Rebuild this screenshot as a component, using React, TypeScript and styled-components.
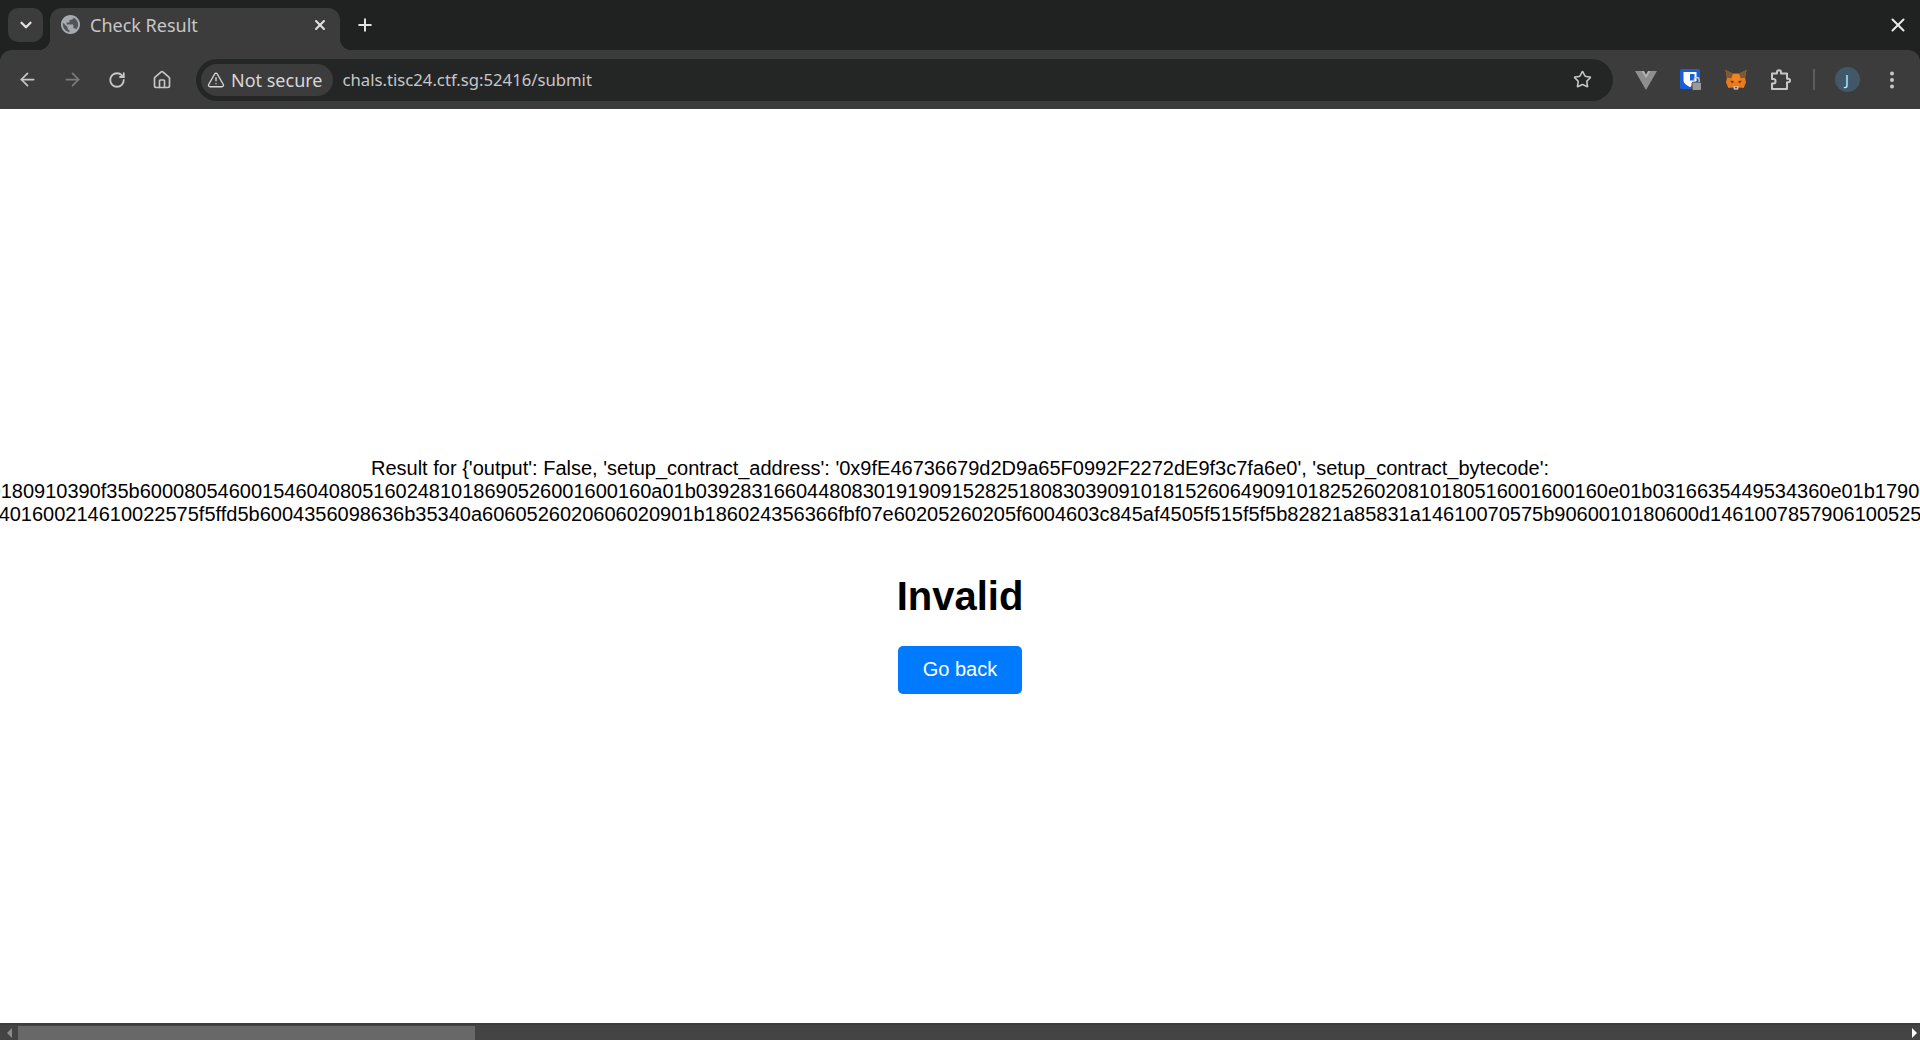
import React from "react";
import styled, { createGlobalStyle } from "styled-components";
import { ArrowLeft, ArrowRight, RotateCw, Home, Star, TriangleAlert, X, Plus, ChevronDown, EllipsisVertical } from "lucide-react";

const Global = createGlobalStyle`
  html, body { margin: 0; padding: 0; height: 1040px; overflow: hidden; background: #fff; }
  #root { height: 1040px; }
  * { box-sizing: border-box; }
`;

const Page = styled.div`
  height: 1040px;
  width: 1920px;
  display: flex;
  flex-direction: column;
  background: #fff;
  font-family: "Liberation Sans", Arial, sans-serif;
`;

const TabStrip = styled.div`
  height: 50px;
  flex: none;
  background: #202222;
  display: flex;
  align-items: flex-end;
  padding-left: 8px;
  padding-right: 4px;
  color: #e3e3e3;
`;

const TabSearch = styled.div`
  width: 35px;
  height: 34px;
  margin-bottom: 8px;
  border-radius: 10px;
  background: #3c3c3c;
  display: flex;
  align-items: center;
  justify-content: center;
  color: #e3e3e3;
`;

const Tab = styled.div`
  position: relative;
  width: 290px;
  height: 42px;
  margin-left: 7px;
  background: #3c3c3c;
  border-radius: 12px 12px 0 0;
  display: flex;
  align-items: center;
  padding: 0 12px 9px 11px;
  &::before, &::after {
    content: "";
    position: absolute;
    bottom: 0;
    width: 12px;
    height: 12px;
  }
  &::before { left: -12px; background: radial-gradient(circle at 0 0, transparent 12px, #3c3c3c 12.5px); }
  &::after { right: -12px; background: radial-gradient(circle at 100% 0, transparent 12px, #3c3c3c 12.5px); }
`;

const TabTitle = styled.span`
  flex: 1;
  margin-left: 10px;
  font: 400 18px/22px "Noto Sans", sans-serif;
  color: #c7c7c7;
`;

const NewTab = styled.div`
  width: 36px;
  height: 36px;
  margin: 0 0 7px 7px;
  display: flex;
  align-items: center;
  justify-content: center;
  color: #e3e3e3;
`;

const StripSpacer = styled.div`
  flex: 1;
`;

const WindowClose = styled.div`
  width: 36px;
  height: 36px;
  margin-bottom: 7px;
  display: flex;
  align-items: center;
  justify-content: center;
  color: #e8e8e8;
`;

const ToolbarBack = styled.div`
  flex: none;
  height: 59px;
  background: #202222;
`;

const Toolbar = styled.div`
  height: 59px;
  background: #3c3c3c;
  border-radius: 12px 12px 0 0;
  display: flex;
  align-items: center;
  padding: 0 10px 0 9px;
  gap: 9px;
`;

const IconButton = styled.div<{ $dim?: boolean }>`
  width: 36px;
  height: 36px;
  flex: none;
  display: flex;
  align-items: center;
  justify-content: center;
  color: ${(p) => (p.$dim ? "#7b7b7b" : "#c7c7c7")};
`;

const Omnibox = styled.div`
  flex: 1;
  height: 42px;
  margin: 0 6px 0 7px;
  border-radius: 21px;
  background: #242626;
  display: flex;
  align-items: center;
  padding: 0 21px 0 5px;
`;

const SecurityChip = styled.div`
  height: 32px;
  padding: 0 10px 0 6px;
  border-radius: 16px;
  background: #3c3c3c;
  display: flex;
  align-items: center;
  gap: 6px;
  color: #d7d7d7;
  font: 400 18px/22px "Noto Sans", sans-serif;
`;

const Url = styled.span`
  flex: 1;
  margin-left: 10px;
  font: 400 16.7px/22px "Noto Sans", sans-serif;
  color: #c7c7c7;
`;

const Divider = styled.div`
  width: 2px;
  height: 21px;
  flex: none;
  background: #5c5c5c;
  margin: 0 5px;
`;

const Avatar = styled.div`
  width: 25px;
  height: 25px;
  border-radius: 50%;
  background: #40586a;
  color: #dfe5ea;
  display: flex;
  align-items: center;
  justify-content: center;
  font: 400 14px "Noto Sans", sans-serif;
`;

const Main = styled.main`
  flex: 1;
  min-height: 0;
  display: flex;
  flex-direction: column;
  align-items: center;
  padding-top: 348px;
  overflow: hidden;
`;

const Line = styled.div`
  width: 100%;
  height: 23px;
  display: flex;
  justify-content: center;
  overflow: hidden;
  font-size: 20px;
  line-height: 23px;
  color: #000;
`;

const LineText = styled.span`
  flex: none;
  white-space: nowrap;
`;

const Title = styled.h1`
  margin: 47px 0 27px;
  font-size: 40px;
  line-height: 46px;
  font-weight: 700;
  color: #000;
`;

const BackButton = styled.a`
  display: block;
  height: 48px;
  padding: 12px 25px;
  border-radius: 5px;
  background: #007bff;
  color: #fff;
  font-size: 20px;
  line-height: 23px;
`;

const ScrollBar = styled.div`
  flex: none;
  height: 17px;
  background: #444;
  border-top: 2px solid #3c3c3c;
  display: flex;
  align-items: center;
  padding-right: 3px;
`;

const ScrollArrow = styled.div<{ $right?: boolean }>`
  width: 0;
  height: 0;
  border-top: 5px solid transparent;
  border-bottom: 5px solid transparent;
  ${(p) => (p.$right ? "border-left: 5px solid #fff; margin-left: 7px;" : "border-right: 5px solid #8c8c8c; margin: 0 6px 0 7px;")}
`;

const ScrollThumb = styled.div`
  width: 457px;
  height: 14px;
  background: #686868;
`;

const ScrollFill = styled.div`
  flex: 1;
`;

const GlobeIcon = () => (
  <svg width="19" height="19" viewBox="2 2 20 20">
    <circle cx="12" cy="12" r="9.500" fill="#50555a" />
    <path
      fill="#a6abb0"
      d="M12 2C6.480 2 2 6.480 2 12s4.480 10 10 10 10-4.480 10-10S17.520 2 12 2zm-1 17.930c-3.950-.490-7-3.850-7-7.930 0-.620.080-1.210.210-1.790L9 15v1c0 1.100.900 2 2 2v1.930zm6.900-2.540c-.260-.810-1-1.390-1.900-1.390h-1v-3c0-.550-.450-1-1-1H8v-2h2c.550 0 1-.450 1-1V7h2c1.100 0 2-.900 2-2v-.410c2.930 1.190 5 4.060 5 7.410 0 2.080-.800 3.970-2.100 5.390z"
    />
  </svg>
);

const VueIcon = () => (
  <svg width="22" height="20" viewBox="0 0 22 20">
    <polygon points="0,1 6,1 11,9 16,1 22,1 11,20" fill="#8e8e8e" />
    <polygon points="6,1 9,1 11,4.500 13,1 16,1 11,9" fill="#b0b0b0" />
  </svg>
);

const ShieldIcon = () => (
  <svg width="22" height="22" viewBox="0 0 22 22">
    <rect x="0" y="0" width="20" height="20" rx="1.500" fill="#1a5fd8" />
    <path d="M3.500 3h13v8.500c0 3-3.500 5-6.500 6.500-3-1.500-6.500-3.500-6.500-6.500Z" fill="#fff" />
    <path d="M10 5h4.500v6.500H10Z" fill="#1a5fd8" />
    <rect x="12" y="13" width="9.500" height="8.500" rx="1.500" fill="#9a9a9a" stroke="#3c3c3c" strokeWidth="1" />
    <path d="M14.200 13v-2a2.500 2.500 0 0 1 5 0v2" fill="none" stroke="#c9c9c9" strokeWidth="1.300" />
  </svg>
);

const FoxIcon = () => (
  <svg width="22" height="20" viewBox="0 0 22 21">
    <polygon points="0,0 8,4 14,4 22,0 20.500,8 21.500,13 19,19 14,18.500 13,21 9,21 8,18.500 3,19 .5,13 1.500,8" fill="#ea7a1c" />
    <polygon points="0,0 8,4 6,9 1.500,8" fill="#7d5a35" />
    <polygon points="22,0 14,4 16,9 20.500,8" fill="#7d5a35" />
    <polygon points="8,4 14,4 16,10 11,13 6,10" fill="#f0861f" />
    <polygon points="5,11 9,12 7,14" fill="#4a3525" />
    <polygon points="17,11 13,12 15,14" fill="#4a3525" />
    <polygon points="8,17 14,17 13,20 9,20" fill="#d7c1b3" />
    <polygon points="9.500,18 12.500,18 11,19.500" fill="#222" />
  </svg>
);

const PuzzleIcon = () => (
  <svg width="22" height="22" viewBox="0 0 22 22" fill="none" stroke="#c7c7c7" strokeWidth="2" strokeLinejoin="round">
    <path d="M2 4.500h5V3.200a2 2 0 0 1 4 0v1.300h6v5.200h1.200a1.800 1.800 0 0 1 0 3.600H17V20H2v-5.500h1.300a2.200 2.200 0 0 0 0-4.500H2Z" />
  </svg>
);

const LINE_2 =
  "0180910390f35b6000805460015460408051602481018690526001600160a01b0392831660448083019190915282518083039091018152606490910182526020810180516001600160e01b0316635449534360e01b17905";
const LINE_3 =
  "401600214610022575f5ffd5b6004356098636b35340a60605260206060 20901b186024356366fbf07e60205260205f6004603c845af4505f515f5f5b82821a85831a14610070575b9060010180600d1461007857906100525".replace(" ", "");

export default function App() {
  return (
    <Page>
      <Global />
      <TabStrip>
        <TabSearch>
          <ChevronDown size={18} strokeWidth={3} />
        </TabSearch>
        <Tab>
          <GlobeIcon />
          <TabTitle>Check Result</TabTitle>
          <X size={16} strokeWidth={3} color="#e3e3e3" />
        </Tab>
        <NewTab>
          <Plus size={20} strokeWidth={2.4} />
        </NewTab>
        <StripSpacer />
        <WindowClose>
          <X size={22} strokeWidth={2.2} />
        </WindowClose>
      </TabStrip>
      <ToolbarBack>
        <Toolbar>
          <IconButton><ArrowLeft size={21} strokeWidth={2} /></IconButton>
          <IconButton $dim><ArrowRight size={21} strokeWidth={2} /></IconButton>
          <IconButton><RotateCw size={18} strokeWidth={2.4} /></IconButton>
          <IconButton><Home size={20} strokeWidth={2} /></IconButton>
          <Omnibox>
            <SecurityChip>
              <TriangleAlert size={18} strokeWidth={1.8} />
              Not secure
            </SecurityChip>
            <Url>chals.tisc24.ctf.sg:52416/submit</Url>
            <Star size={19} strokeWidth={2} color="#c7c7c7" />
          </Omnibox>
          <IconButton><VueIcon /></IconButton>
          <IconButton><ShieldIcon /></IconButton>
          <IconButton><FoxIcon /></IconButton>
          <IconButton><PuzzleIcon /></IconButton>
          <Divider />
          <IconButton><Avatar>J</Avatar></IconButton>
          <IconButton><EllipsisVertical size={22} strokeWidth={2.4} /></IconButton>
        </Toolbar>
      </ToolbarBack>
      <Main>
        <Line><LineText>Result for {"{"}'output': False, 'setup_contract_address': '0x9fE46736679d2D9a65F0992F2272dE9f3c7fa6e0', 'setup_contract_bytecode':</LineText></Line>
        <Line><LineText>{LINE_2}</LineText></Line>
        <Line><LineText>{LINE_3}</LineText></Line>
        <Title>Invalid</Title>
        <BackButton>Go back</BackButton>
      </Main>
      <ScrollBar>
        <ScrollArrow />
        <ScrollThumb />
        <ScrollFill />
        <ScrollArrow $right />
      </ScrollBar>
    </Page>
  );
}
